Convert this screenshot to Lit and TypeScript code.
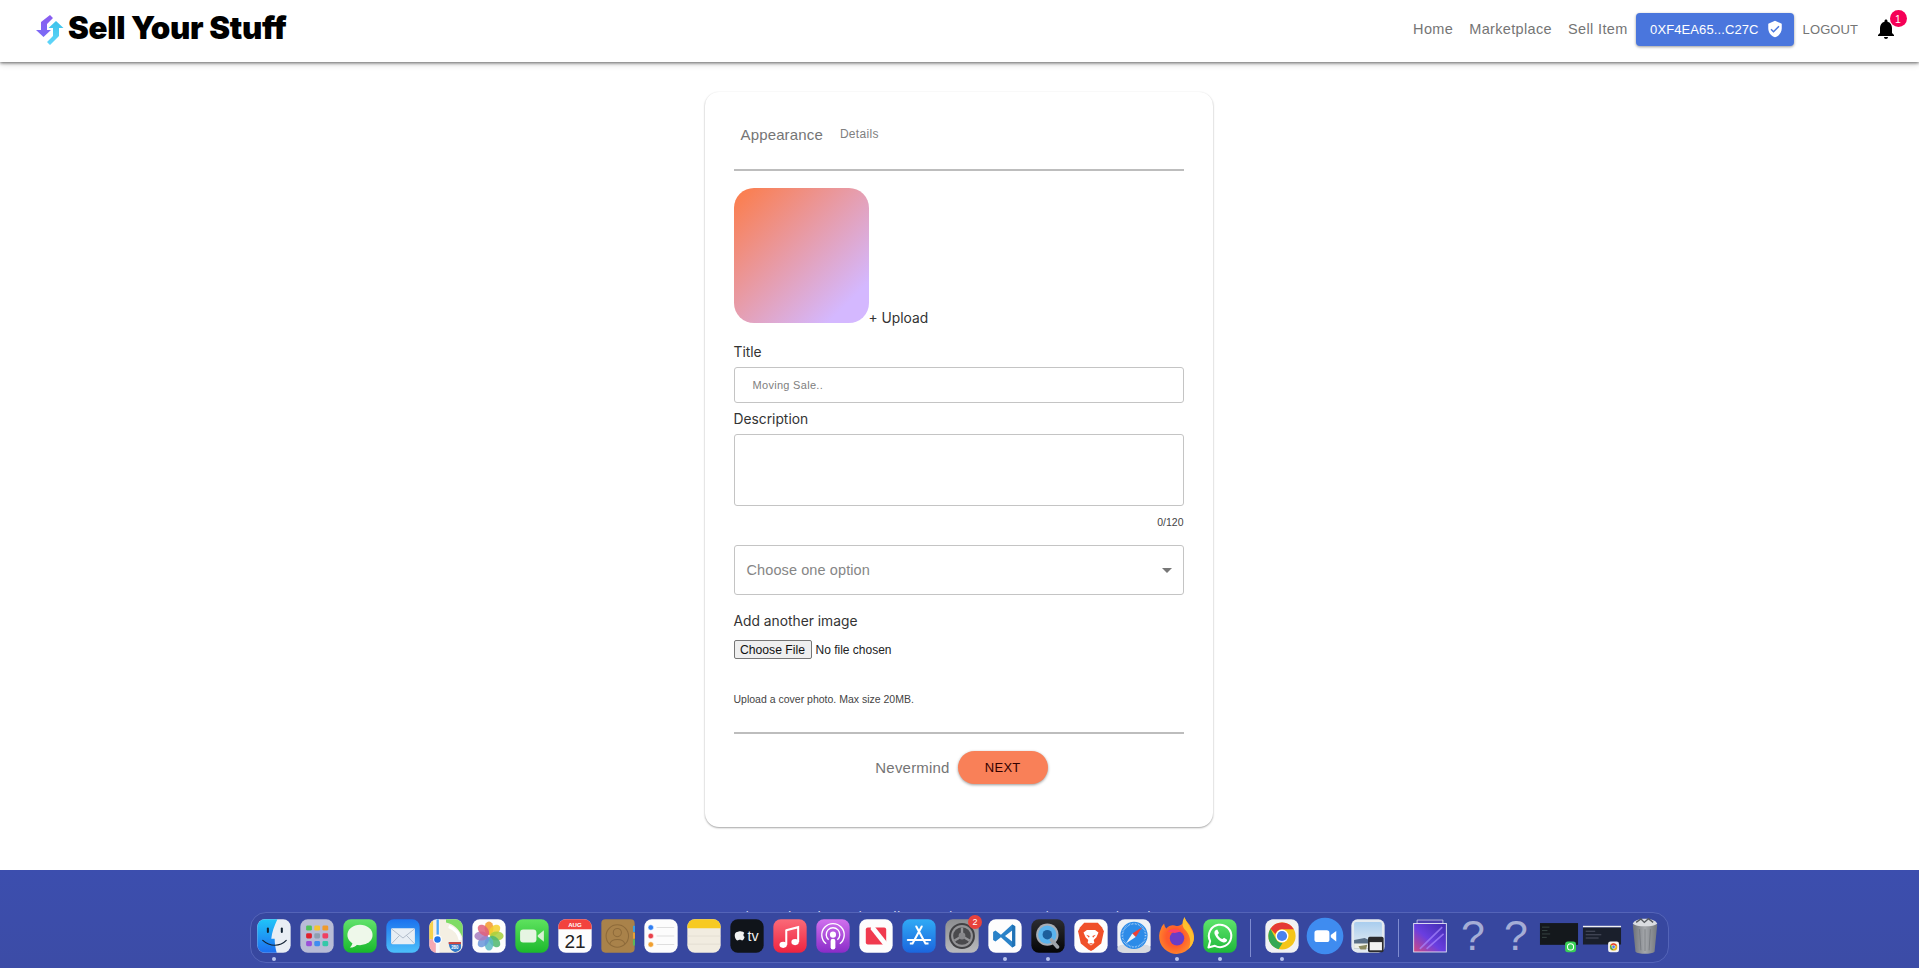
import { LitElement, html, css, svg } from "lit";
import { customElement } from "lit/decorators.js";

const dot = new Set(["finder", "vscode", "quicktime", "firefox", "whatsapp", "chrome"]);

const icons: Record<string, any> = {
  finder: svg`<defs><linearGradient id="fb" x1="0" y1="0" x2="0" y2="1"><stop offset="0" stop-color="#20c4f8"/><stop offset="1" stop-color="#1d6ff0"/></linearGradient></defs>
    <rect x="1" y="1" width="98" height="98" rx="22" fill="#e9eef4"/>
    <path d="M23 1H60C50 22 44 40 42 58H52C52 72 54 86 58 99H23A22 22 0 0 1 1 77V23A22 22 0 0 1 23 1Z" fill="url(#fb)"/>
    <rect x="29" y="25" width="6" height="16" rx="3" fill="#123"/><rect x="70" y="25" width="6" height="16" rx="3" fill="#123"/>
    <path d="M17 63C38 82 68 82 86 63" fill="none" stroke="#123" stroke-width="3.5" stroke-linecap="round"/>`,
  launchpad: svg`<rect x="1" y="1" width="98" height="98" rx="22" fill="#b8bcd6"/>
    ${[["#4fc35a", "#f4c430", "#f09a2c"], ["#e0202c", "#8e9fb0", "#ef3f62"], ["#9a50d8", "#3f8df0", "#35c8a8"]].map((row, r) =>
      row.map((c, i) => svg`<rect x="${18 + i * 24}" y="${19 + r * 23}" width="17" height="15" rx="4" fill="${c}"/>`))}`,
  messages: svg`<defs><linearGradient id="mg" x1="0" y1="0" x2="0" y2="1"><stop offset="0" stop-color="#62e26c"/><stop offset="1" stop-color="#18b82c"/></linearGradient></defs>
    <rect x="1" y="1" width="98" height="98" rx="22" fill="url(#mg)"/>
    <ellipse cx="50" cy="47" rx="37" ry="30" fill="#eef8ea"/><path d="M28 68C28 76 24 81 20 84C30 84 38 80 42 74Z" fill="#eef8ea"/>`,
  mail: svg`<defs><linearGradient id="ml" x1="0" y1="0" x2="0" y2="1"><stop offset="0" stop-color="#1c72ee"/><stop offset="1" stop-color="#4cc0fb"/></linearGradient></defs>
    <rect x="1" y="1" width="98" height="98" rx="22" fill="url(#ml)"/>
    <rect x="15" y="27" width="70" height="47" rx="4" fill="#e8eef4"/>
    <path d="M16 29L50 56L84 29M16 73L40 48M84 73L60 48" fill="none" stroke="#a9b5c4" stroke-width="2.5"/>`,
  maps: svg`<rect x="1" y="1" width="98" height="98" rx="22" fill="#f4efe3"/>
    <path d="M50 1H77A22 22 0 0 1 99 23V55C90 30 72 14 50 10Z" fill="#7fdc66"/>
    <path d="M58 22C75 28 88 42 92 62" fill="none" stroke="#fff" stroke-width="9"/>
    <path d="M1 24A22 22 0 0 1 12 5V60H1Z" fill="#f6d24a"/>
    <rect x="20" y="1" width="11" height="98" fill="#f8f8fa"/><rect x="22" y="1" width="7" height="45" fill="#4aa5f5"/>
    <path d="M1 62L20 56V99H23A22 22 0 0 1 1 77Z" fill="#f5a9b3"/>
    <circle cx="25" cy="60" r="13" fill="#fff"/><circle cx="25" cy="60" r="9.5" fill="#1f76ea"/>
    <path d="M58 68H94V86C88 97 76 97 76 97C68 95 58 88 58 68Z" fill="#2f78c8"/><path d="M58 68H94V74H58Z" fill="#d8483c"/>
    <text x="76" y="89" font-size="13" fill="#fff" text-anchor="middle" font-family="Liberation Sans" font-weight="700">280</text>`,
  photos: svg`<rect x="1" y="1" width="98" height="98" rx="22" fill="#fdfdfd"/>
    ${["#f39a2d", "#f3cf2c", "#a5cf3e", "#4fb86f", "#5bb8c4", "#6a96da", "#a87dc0", "#e0617b"].map((c, i) =>
      svg`<ellipse cx="50" cy="27" rx="13" ry="20" fill="${c}" fill-opacity=".86" transform="rotate(${i * 45} 50 50)"/>`)}`,
  facetime: svg`<defs><linearGradient id="ft" x1="0" y1="0" x2="0" y2="1"><stop offset="0" stop-color="#5ee25e"/><stop offset="1" stop-color="#1cb92c"/></linearGradient></defs>
    <rect x="1" y="1" width="98" height="98" rx="22" fill="url(#ft)"/>
    <rect x="15" y="31" width="48" height="38" rx="9" fill="#e6f5e2"/><path d="M67 48L85 33V67L67 52Z" fill="#d6f0d2"/>`,
  calendar: svg`<rect x="1" y="1" width="98" height="98" rx="22" fill="#fdfdfd"/>
    <path d="M23 1H77A22 22 0 0 1 99 23V30H1V23A22 22 0 0 1 23 1Z" fill="#f2423e"/>
    <text x="50" y="23" font-size="18" font-weight="700" fill="#fff" text-anchor="middle" font-family="Liberation Sans">AUG</text>
    <text x="50" y="84" font-size="56" fill="#222" text-anchor="middle" font-family="Liberation Sans">21</text>`,
  contacts: svg`<rect x="1" y="1" width="98" height="98" rx="12" fill="#a9824a"/>
    <rect x="94" y="20" width="6" height="18" fill="#3a9ee0"/><rect x="94" y="40" width="6" height="18" fill="#e6a13a"/><rect x="94" y="60" width="6" height="18" fill="#5cb85c"/>
    <circle cx="48" cy="50" r="33" fill="none" stroke="#8d6a3a" stroke-width="3"/><circle cx="48" cy="40" r="12" fill="none" stroke="#8d6a3a" stroke-width="3"/>
    <path d="M26 73C30 56 66 56 70 73" fill="none" stroke="#8d6a3a" stroke-width="3"/>`,
  reminders: svg`<rect x="1" y="1" width="98" height="98" rx="22" fill="#fcfcfc"/>
    ${[["#2f7ef2", 25], ["#e8404a", 50], ["#f0a030", 75]].map(([c, y]) => svg`<circle cx="20" cy="${y}" r="8" fill="${c}" stroke="#fff" stroke-width="1.5"/><rect x="37" y="${(y as number) - 1}" width="52" height="2" fill="#d0d0d0"/>`)}`,
  notes: svg`<rect x="1" y="1" width="98" height="98" rx="22" fill="#f1ece0"/>
    <path d="M23 1H77A22 22 0 0 1 99 23V27H1V23A22 22 0 0 1 23 1Z" fill="#f7ca22"/>
    <path d="M1 50H99M1 74H99" stroke="#d9d3c5" stroke-width="1.5"/>`,
  tv: svg`<rect x="1" y="1" width="98" height="98" rx="22" fill="#10141a"/>
    <path d="M31 35C27 35 24 38 21 38C17 38 14 42 14 48C14 55 18 63 22 63C25 63 26 61 29 61C32 61 33 63 36 63C39 63 42 57 43 53C39 51 38 44 42 41C40 38 35 36 31 37Z" fill="#f2f2f2"/>
    <text x="68" y="64" font-size="42" fill="#f2f2f2" text-anchor="middle" font-family="Liberation Sans">tv</text>`,
  music: svg`<defs><linearGradient id="mu" x1="0" y1="0" x2="0" y2="1"><stop offset="0" stop-color="#fa6a78"/><stop offset="1" stop-color="#ef2440"/></linearGradient></defs>
    <rect x="1" y="1" width="98" height="98" rx="22" fill="url(#mu)"/>
    <path d="M39 33L74 24V68" fill="none" stroke="#fff" stroke-width="6"/><path d="M39 31V76" stroke="#fff" stroke-width="6"/>
    <ellipse cx="30" cy="76" rx="11" ry="9" fill="#fff"/><ellipse cx="65" cy="68" rx="11" ry="9" fill="#fff"/>`,
  podcasts: svg`<defs><linearGradient id="po" x1="0" y1="0" x2="0" y2="1"><stop offset="0" stop-color="#d070ee"/><stop offset="1" stop-color="#8a2cc8"/></linearGradient></defs>
    <rect x="1" y="1" width="98" height="98" rx="22" fill="url(#po)"/>
    <path d="M30 73A33 33 0 1 1 70 73" fill="none" stroke="#fff" stroke-width="4"/><path d="M37 61A20 20 0 1 1 63 61" fill="none" stroke="#fff" stroke-width="4"/>
    <circle cx="50" cy="46" r="9" fill="#fff"/><rect x="43" y="58" width="14" height="32" rx="7" fill="#fff"/>`,
  news: svg`<rect x="1" y="1" width="98" height="98" rx="22" fill="#fdfdfd"/>
    <rect x="20" y="25" width="60" height="50" rx="6" fill="#f03a4e"/><path d="M36 22L46 22L84 70V78H72L34 30Z" fill="#fdfdfd"/>`,
  appstore: svg`<defs><linearGradient id="as" x1="0" y1="0" x2="0" y2="1"><stop offset="0" stop-color="#30aaf5"/><stop offset="1" stop-color="#1b66de"/></linearGradient></defs>
    <rect x="1" y="1" width="98" height="98" rx="22" fill="url(#as)"/>
    <path d="M58 22L31 72M42 22L69 72M17 62H83" stroke="#fff" stroke-width="6" stroke-linecap="round" fill="none"/><path d="M23 72L30 72M70 72H78" stroke="#fff" stroke-width="6"/>`,
  settings: svg`<defs><linearGradient id="se" x1="0" y1="0" x2="0" y2="1"><stop offset="0" stop-color="#8c8d90"/><stop offset="1" stop-color="#b9babd"/></linearGradient></defs>
    <rect x="1" y="1" width="98" height="98" rx="22" fill="url(#se)"/>
    <circle cx="50" cy="50" r="38" fill="#414144"/><circle cx="50" cy="50" r="32" fill="#939396"/><circle cx="50" cy="50" r="26" fill="#4a4a4d"/>
    <circle cx="50" cy="50" r="10" fill="#88888b"/><path d="M50 41V25M58 55L72 63M42 55L28 63" stroke="#939396" stroke-width="7"/>`,
  vscode: svg`<rect x="1" y="1" width="98" height="98" rx="22" fill="#fdfdfd"/>
    <path d="M71 16L80 21V79L71 84L38 54L22 66L15 62V38L22 34L38 46ZM71 34L50 50L71 66Z" fill="#2a82c8"/><path d="M71 16L80 21V79L71 84V66V34Z" fill="#1f72b6"/>`,
  quicktime: svg`<defs><linearGradient id="qt" x1="0" y1="0" x2="0" y2="1"><stop offset="0" stop-color="#2c2c30"/><stop offset="1" stop-color="#050506"/></linearGradient></defs>
    <rect x="1" y="1" width="98" height="98" rx="22" fill="url(#qt)"/>
    <circle cx="48" cy="46" r="33" fill="#a8adb4"/><circle cx="48" cy="46" r="27" fill="#5ab4ee"/><circle cx="48" cy="46" r="14" fill="#1d5f9c"/>
    <path d="M60 62L78 82" stroke="#a0a4aa" stroke-width="11" stroke-linecap="round"/>`,
  brave: svg`<rect x="1" y="1" width="98" height="98" rx="22" fill="#fdfdfd"/>
    <path d="M30 11H70L82 24L88 36L80 72L58 90L50 94L42 90L20 72L12 36L18 24Z" fill="#f0502a"/>
    <path d="M28 40L38 32H62L72 40L66 54L58 62L60 70L50 78L40 70L42 62L34 54Z" fill="#fff"/>
    <path d="M36 46L46 50L44 55ZM64 46L54 50L56 55Z" fill="#f0502a"/><path d="M44 71H56L50 76Z" fill="#f0502a"/>`,
  safari: svg`<rect x="1" y="1" width="98" height="98" rx="22" fill="#f0f2f5"/>
    <rect x="1" y="76" width="98" height="23" rx="15" fill="#d8dbe0"/>
    <circle cx="50" cy="48" r="40" fill="#2c8be8"/><circle cx="50" cy="48" r="34" fill="none" stroke="#cfe6fb" stroke-width="5" stroke-dasharray="1.4 3"/>
    <path d="M74 24L55 53L45 43Z" fill="#ef4036"/><path d="M26 72L45 43L55 53Z" fill="#eef3f8"/>`,
  firefox: svg`<defs><radialGradient id="ff" cx=".45" cy=".55" r=".6"><stop offset=".4" stop-color="#ff5a2c"/><stop offset=".85" stop-color="#ff8a2a"/><stop offset="1" stop-color="#ffb52e"/></radialGradient></defs>
    <path d="M70 0C72 12 82 16 86 26C94 38 96 48 94 60A46 46 0 1 1 8 30C10 24 14 20 16 17C17 23 19 27 22 30C30 20 42 20 48 24C60 24 72 16 70 0Z" fill="url(#ff)"/>
    <path d="M70 0C72 12 88 26 94 50C96 64 90 76 80 84C90 66 84 46 70 32C64 26 62 12 70 0Z" fill="#ffc02e"/>
    <circle cx="50" cy="56" r="19" fill="#6a3dc6"/><path d="M26 38C36 30 50 30 60 38L44 42Z" fill="#ff3f6c"/>`,
  whatsapp: svg`<defs><linearGradient id="wa" x1="0" y1="0" x2="0" y2="1"><stop offset="0" stop-color="#5ee46c"/><stop offset="1" stop-color="#1eb83a"/></linearGradient></defs>
    <rect x="1" y="1" width="98" height="98" rx="22" fill="url(#wa)"/>
    <path d="M16 84L21 65A33 33 0 1 1 35 79Z" fill="none" stroke="#fff" stroke-width="6" stroke-linejoin="round"/>
    <path d="M38 32C34 34 32 40 35 46C40 58 50 66 60 69C66 70 71 66 71 61L62 55L57 59C51 57 46 52 43 46L47 41L42 31Z" fill="#fff"/>`,
  chrome: svg`<rect x="1" y="1" width="98" height="98" rx="22" fill="#f1f1f3"/>
    <circle cx="50" cy="50" r="40" fill="#f5c518"/>
    <path d="M50 10A40 40 0 0 1 85 30H50A20 20 0 0 0 31 44L16 29A40 40 0 0 1 50 10Z" fill="#e53935"/>
    <path d="M16 29L33 60A20 20 0 0 0 52 70L40 89A40 40 0 0 1 16 29Z" fill="#34a853"/>
    <circle cx="50" cy="50" r="19" fill="#fff"/><circle cx="50" cy="50" r="15" fill="#4a82ee"/>`,
  zoom: svg`<circle cx="50" cy="50" r="54" fill="#3f8cf0"/><rect x="19" y="33" width="44" height="35" rx="8" fill="#fff"/><path d="M67 47L83 35V66L67 54Z" fill="#fff"/>`,
  preview: svg`<rect x="1" y="1" width="98" height="98" rx="18" fill="#e4eaf0"/>
    <defs><linearGradient id="pv" x1="0" y1="0" x2="0" y2="1"><stop offset="0" stop-color="#a9cdee"/><stop offset="1" stop-color="#e8eef2"/></linearGradient></defs>
    <rect x="9" y="9" width="82" height="78" rx="6" fill="url(#pv)"/>
    <path d="M9 62L40 56L58 64V87H9Z" fill="#5a6f86"/><path d="M9 72H60V87H9Z" fill="#eef0e8"/>
    <rect x="50" y="52" width="46" height="46" rx="5" fill="#2a2a2c"/><rect x="55" y="68" width="36" height="24" fill="#f2f2f2"/>
    <path d="M22 80L48 76L44 90L28 90Z" fill="#8b8a60"/>`,
  stack: svg`<path d="M12 3H88V14H12Z" fill="#4a3fb0" stroke="#e6e8f6" stroke-width="2"/>
    <defs><linearGradient id="st" x1="0" y1="1" x2="1" y2="0"><stop offset="0" stop-color="#d04a80"/><stop offset=".45" stop-color="#6a3ee0"/><stop offset="1" stop-color="#3f2bb0"/></linearGradient></defs>
    <rect x="2" y="13" width="96" height="84" fill="url(#st)" stroke="#eef0fa" stroke-width="2.5"/>
    <path d="M20 88L86 24M40 88L90 44" stroke="#a988ff" stroke-width="5" opacity=".7"/>`,
  q: svg`<text x="50" y="90" font-size="126" fill="#a5add6" text-anchor="middle" font-family="Liberation Sans" font-weight="400">?</text>`,
  win1: svg`<rect x="-6" y="12" width="112" height="64" fill="#14181c"/><path d="M0 24H22M0 34H16M0 44H24M0 54H14" stroke="#3c4a48" stroke-width="2.5"/>
    <rect x="68" y="66" width="32" height="32" rx="8" fill="#38cf56"/><circle cx="84" cy="82" r="9" fill="none" stroke="#fff" stroke-width="3"/>`,
  win2: svg`<rect x="-6" y="20" width="112" height="5" fill="#f0f0f0"/><rect x="-6" y="25" width="112" height="50" fill="#1a1f2c"/><path d="M2 36H30M2 46H48M2 56H40" stroke="#4c5060" stroke-width="3"/>
    <rect x="68" y="66" width="32" height="32" rx="7" fill="#f4f4f4"/><circle cx="84" cy="82" r="11" fill="#e5b51c"/><path d="M84 71A11 11 0 0 1 94 78H84L75 76A11 11 0 0 1 84 71Z" fill="#e53935"/><path d="M75 76L84 92A11 11 0 0 1 75 76Z" fill="#34a853"/><circle cx="84" cy="82" r="5" fill="#4a82ee" stroke="#fff" stroke-width="1.5"/>`,
  trash: svg`<defs><linearGradient id="tr" x1="0" y1="0" x2="1" y2="0"><stop offset="0" stop-color="#6f7278"/><stop offset=".5" stop-color="#a5a8ac"/><stop offset="1" stop-color="#74777c"/></linearGradient></defs>
    <path d="M14 16H86L78 96C70 104 30 104 22 96Z" fill="url(#tr)"/>
    <path d="M14 14C20 -6 80 -6 86 14C78 24 22 24 14 14Z" fill="#dadce0"/><path d="M24 10L38 0L48 10L60 -1L74 10" fill="none" stroke="#55585e" stroke-width="4"/>
    <path d="M34 30L38 92M50 30V94M66 30L62 92" stroke="#63666c" stroke-width="1.5"/>`,
};

const dockOrder = ["finder", "launchpad", "messages", "mail", "maps", "photos", "facetime", "calendar", "contacts", "reminders", "notes", "tv", "music", "podcasts", "news", "appstore", "settings", "vscode", "quicktime", "brave", "safari", "firefox", "whatsapp", "|", "chrome", "zoom", "preview", "|", "stack", "q", "q", "win1", "win2", "trash"];

@customElement("app-root")
export class AppRoot extends LitElement {
  static styles = css`
    :host { display: block; font-family: "Inter", "Liberation Sans", sans-serif; color: #222; background: #fff; }
    .page { display: flex; flex-direction: column; height: 968px; overflow: hidden; position: relative; }
    header { height: 62px; flex: none; display: flex; align-items: center; background: #fff; box-shadow: 0 1px 3px rgba(0,0,0,.55), 0 3px 6px rgba(0,0,0,.12); padding: 0 18.5px 4px 36px; box-sizing: border-box; position: relative; }
    .logo { display: flex; align-items: center; flex: 1; }
    .logo svg { width: 28px; height: 33px; margin-right: 4px; }
    .brand { font-family: "Inter", "Liberation Sans", sans-serif; font-weight: 900; font-size: 31.3px; line-height: 36px; color: #000; letter-spacing: -.3px; margin-top: -2px; }
    nav { display: flex; align-items: center; }
    .link { font-family: "Liberation Sans", sans-serif; font-size: 14.5px; color: #757575; letter-spacing: .35px; margin-right: 16px; }
    .wallet { width: 158px; height: 33px; box-sizing: border-box; background: #4a76dd; color: #fff; border-radius: 4px; box-shadow: 0 1px 3px rgba(0,0,0,.4); font-family: "Liberation Sans", sans-serif; font-size: 13px; letter-spacing: .1px; display: flex; align-items: center; padding-left: 14px; margin-left: -7.5px; }
    .wallet svg { width: 18px; height: 18px; margin-left: 7px; }
    .logout { font-family: "Liberation Sans", sans-serif; font-size: 13px; letter-spacing: .1px; color: #757575; margin: 0 15.4px 0 8.5px; }
    .bell { position: relative; width: 24px; height: 24px; margin-right: 3px; }
    .bell svg { width: 24px; height: 24px; display: block; }
    .badge { position: absolute; top: -7px; right: -9px; width: 17px; height: 17px; border-radius: 50%; background: #f50057; color: #fff; font-family: "Liberation Sans", sans-serif; font-size: 10.5px; display: flex; align-items: center; justify-content: center; }
    main { flex: 1; display: flex; justify-content: center; padding: 30px 2px 0 0; }
    .card { width: 508px; height: 735px; box-sizing: border-box; background: #fff; border-radius: 14px; box-shadow: 0 1px 2px rgba(0,0,0,.35), 0 0 2px rgba(0,0,0,.04); padding: 0 29px; display: flex; flex-direction: column; }
    .tabs { height: 70px; flex: none; border-bottom: 2px solid #bdbdbd; display: flex; align-items: center; padding: 7px 0 0 7px; box-sizing: content-box; }
    .tab1 { font-family: "Liberation Sans", sans-serif; font-size: 15px; letter-spacing: .15px; color: #757575; }
    .tab2 { font-family: "Liberation Sans", sans-serif; font-size: 12px; letter-spacing: .3px; color: #808080; margin-left: 17px; }
    .upload { display: flex; align-items: flex-end; margin-top: 17px; height: 135px; flex: none; }
    .thumb { width: 135px; height: 135px; border-radius: 20px; background: linear-gradient(135deg, #fa7f52 5%, #d4b8ff 85%); }
    .upl { font-size: 13.8px; line-height: 18px; margin-bottom: -4px; color: #333; }
    label { font-size: 13.8px; line-height: 18px; display: block; color: #333; }
    .l-title { margin-top: 20px; }
    .input { height: 36px; flex: none; margin-top: 6px; box-sizing: border-box; border: 1px solid #c4c4c4; border-radius: 3px; display: flex; align-items: center; padding-left: 18px; font-family: "Liberation Sans", sans-serif; font-size: 11px; letter-spacing: .3px; color: #808080; }
    .l-desc { margin-top: 7px; }
    .area { height: 72px; flex: none; margin-top: 6px; box-sizing: border-box; border: 1px solid #c4c4c4; border-radius: 3px; }
    .count { text-align: right; font-family: "Liberation Sans", sans-serif; font-size: 10.5px; color: #444; margin-top: 10px; line-height: 12px; }
    .select { height: 50px; flex: none; margin-top: 17px; box-sizing: border-box; border: 1px solid #c4c4c4; border-radius: 3px; display: flex; align-items: center; justify-content: space-between; padding: 0 11px 0 12px; font-family: "Liberation Sans", sans-serif; font-size: 14.5px; letter-spacing: .1px; color: #868686; }
    .caret { width: 0; height: 0; border-left: 5px solid transparent; border-right: 5px solid transparent; border-top: 5px solid #777; }
    .l-add { margin-top: 17px; }
    .file { display: flex; align-items: center; margin-top: 10px; font-family: "Liberation Sans", sans-serif; font-size: 12px; color: #222; height: 19px; flex: none; }
    .filebtn { width: 78px; height: 19px; box-sizing: border-box; border: 1px solid #767676; background: #efefef; border-radius: 2px; display: flex; align-items: center; justify-content: center; margin-right: 4px; color: #111; font-size: 12.2px; }
    .hint { font-family: "Liberation Sans", sans-serif; font-size: 10.5px; letter-spacing: 0; color: #444; margin-top: 34px; line-height: 12px; }
    .rule { height: 2px; flex: none; background: #bdbdbd; margin-top: 27px; }
    .actions { display: flex; justify-content: center; align-items: center; margin: 17px 0 0 6px; }
    .never { font-family: "Liberation Sans", sans-serif; font-size: 15px; letter-spacing: .2px; color: #757575; margin-right: 8px; }
    .next { width: 90px; height: 33px; border-radius: 17px; background: #f98058; box-shadow: 0 1px 3px rgba(0,0,0,.4); display: flex; align-items: center; justify-content: center; font-family: "Liberation Sans", sans-serif; font-size: 13px; color: #300; letter-spacing: .3px; }
    footer { height: 98px; flex: none; background: linear-gradient(#3c4eae, #3c4ca6); color: #d8dcf0; position: relative; overflow: hidden; }
    .flinks { position: absolute; left: 692px; top: 38px; font-family: "Liberation Sans", sans-serif; font-size: 15px; letter-spacing: .3px; word-spacing: 1.5px; color: #cfd4ee; white-space: pre; }
    .dock { position: absolute; left: 250px; top: 42px; width: 1419px; height: 51px; box-sizing: border-box; background: #37479f; border: 1px solid #5464b8; border-radius: 16px; display: flex; align-items: flex-start; padding: 6px 0 0 1px; }
    .slot { width: 43px; height: 40px; flex: none; position: relative; display: flex; justify-content: center; }
    .slot svg { width: 34px; height: 34px; display: block; overflow: visible; }
    .slot.wide svg { width: 38px; height: 38px; margin-top: -2px; }
    .pip { position: absolute; left: 50%; bottom: -2px; width: 4px; height: 4px; margin-left: -2px; border-radius: 50%; background: #b9c3ee; }
    .rd { position: absolute; top: -4px; right: 1px; width: 14px; height: 14px; border-radius: 50%; background: #e8423c; color: #fff; font-family: "Liberation Sans", sans-serif; font-size: 9px; display: flex; align-items: center; justify-content: center; }
    .sep { width: 19px; flex: none; position: relative; height: 38px; }
    .sep::after { content: ""; position: absolute; left: 9px; top: 0; width: 1px; height: 38px; background: #7f8cd0; }
  `;

  render() {
    return html`<div class="page">
      <header>
        <div class="logo">
          <svg viewBox="0 0 28 33">
            <defs>
              <linearGradient id="lg1" x1="0" y1="0" x2="0" y2="1"><stop offset="0" stop-color="#8a5cf0"/><stop offset="1" stop-color="#7a6cf6"/></linearGradient>
              <linearGradient id="lg2" x1="0" y1="0" x2="0" y2="1"><stop offset="0" stop-color="#3cc2ea"/><stop offset="1" stop-color="#62d6fa"/></linearGradient>
            </defs>
            <path d="M14 2L17 5L11 11V17H15L7.5 24L0 17H5V9Z" fill="url(#lg1)"/>
            <path d="M20 8L27.5 15H23V23L14 32L11 29L17 23V15H12.5Z" fill="url(#lg2)"/>
          </svg>
          <span class="brand">Sell Your Stuff</span>
        </div>
        <nav>
          <span class="link">Home</span>
          <span class="link">Marketplace</span>
          <span class="link">Sell Item</span>
          <div class="wallet">0XF4EA65...C27C
            <svg viewBox="0 0 24 24"><path fill="#fff" d="M12 1 3 5v6c0 5.55 3.84 10.74 9 12 5.16-1.26 9-6.45 9-12V5l-9-4zm-2 16-4-4 1.41-1.41L10 14.17l6.59-6.59L18 9l-8 8z"/></svg>
          </div>
          <span class="logout">LOGOUT</span>
          <div class="bell">
            <svg viewBox="0 0 24 24"><path fill="#000" d="M12 22c1.1 0 2-.9 2-2h-4c0 1.1.9 2 2 2zm6-6v-5c0-3.07-1.63-5.64-4.5-6.32V4c0-.83-.67-1.5-1.5-1.5s-1.5.67-1.5 1.5v.68C7.64 5.36 6 7.92 6 11v5l-2 2v1h16v-1l-2-2z"/></svg>
            <span class="badge">1</span>
          </div>
        </nav>
      </header>
      <main>
        <div class="card">
          <div class="tabs"><span class="tab1">Appearance</span><span class="tab2">Details</span></div>
          <div class="upload"><div class="thumb"></div><span class="upl">+ Upload</span></div>
          <label class="l-title">Title</label>
          <div class="input">Moving Sale..</div>
          <label class="l-desc">Description</label>
          <div class="area"></div>
          <div class="count">0/120</div>
          <div class="select"><span>Choose one option</span><span class="caret"></span></div>
          <label class="l-add">Add another image</label>
          <div class="file"><span class="filebtn">Choose File</span>No file chosen</div>
          <div class="hint">Upload a cover photo. Max size 20MB.</div>
          <div class="rule"></div>
          <div class="actions"><span class="never">Nevermind</span><span class="next">NEXT</span></div>
        </div>
      </main>
      <footer>
        <div class="flinks">Home  |  Marketplace  |  Sell Item  |  Our Story  |  Terms  |  Privacy</div>
        <div class="dock">
          ${dockOrder.map((k) => k === "|" ? html`<div class="sep"></div>` : html`<div class="slot ${k === "firefox" ? "wide" : ""}">
            <svg viewBox="0 0 100 100">${icons[k]}</svg>
            ${dot.has(k) ? html`<span class="pip"></span>` : ""}
            ${k === "settings" ? html`<span class="rd">2</span>` : ""}
          </div>`)}
        </div>
      </footer>
    </div>`;
  }
}
